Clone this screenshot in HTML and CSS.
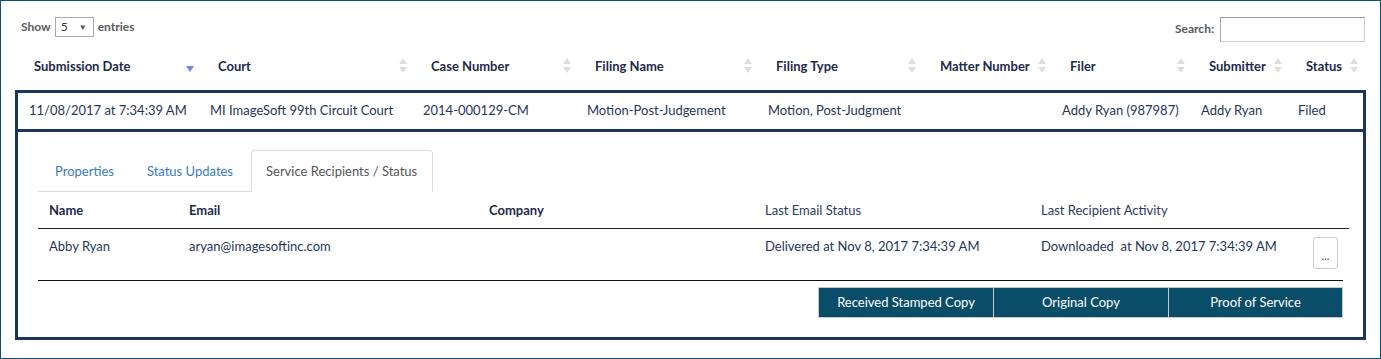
FILE: index.html
```html
<!DOCTYPE html>
<html>
<head>
<meta charset="utf-8">
<link rel="stylesheet" href="styles.css">
</head>
<body>
<div class="page">
  <div class="controls">
    <div class="length">
      <span class="lbl">Show</span>
      <span class="select"><span>5</span><span class="caret">&#9660;</span></span>
      <span class="lbl">entries</span>
    </div>
    <div class="search">
      <span class="lbl">Search:</span>
      <span class="input"></span>
    </div>
  </div>

  <div class="thead">
    <div class="th">Submission Date<span class="sort active"><svg width="8" height="6" viewBox="0 0 8 6"><path d="M0 0H8L4 6Z" fill="#7f82de"/></svg></span></div>
    <div class="th">Court<span class="sort"><svg width="8" height="15" viewBox="0 0 8 15"><path d="M4 0L8 6H0Z M0 9H8L4 15Z" fill="#dedede"/></svg></span></div>
    <div class="th">Case Number<span class="sort"><svg width="8" height="15" viewBox="0 0 8 15"><path d="M4 0L8 6H0Z M0 9H8L4 15Z" fill="#dedede"/></svg></span></div>
    <div class="th">Filing Name<span class="sort"><svg width="8" height="15" viewBox="0 0 8 15"><path d="M4 0L8 6H0Z M0 9H8L4 15Z" fill="#dedede"/></svg></span></div>
    <div class="th">Filing Type<span class="sort"><svg width="8" height="15" viewBox="0 0 8 15"><path d="M4 0L8 6H0Z M0 9H8L4 15Z" fill="#dedede"/></svg></span></div>
    <div class="th">Matter Number<span class="sort"><svg width="8" height="15" viewBox="0 0 8 15"><path d="M4 0L8 6H0Z M0 9H8L4 15Z" fill="#dedede"/></svg></span></div>
    <div class="th">Filer<span class="sort"><svg width="8" height="15" viewBox="0 0 8 15"><path d="M4 0L8 6H0Z M0 9H8L4 15Z" fill="#dedede"/></svg></span></div>
    <div class="th">Submitter<span class="sort"><svg width="8" height="15" viewBox="0 0 8 15"><path d="M4 0L8 6H0Z M0 9H8L4 15Z" fill="#dedede"/></svg></span></div>
    <div class="th th-last">Status<span class="sort"><svg width="8" height="15" viewBox="0 0 8 15"><path d="M4 0L8 6H0Z M0 9H8L4 15Z" fill="#dedede"/></svg></span></div>
  </div>

  <div class="frame">
    <div class="row">
      <div class="td">11/08/2017 at 7:34:39 AM</div>
      <div class="td">MI ImageSoft 99th Circuit Court</div>
      <div class="td">2014-000129-CM</div>
      <div class="td">Motion-Post-Judgement</div>
      <div class="td">Motion, Post-Judgment</div>
      <div class="td"></div>
      <div class="td">Addy Ryan (987987)</div>
      <div class="td">Addy Ryan</div>
      <div class="td">Filed</div>
    </div>
    <div class="detail">
      <div class="tabs">
        <span class="tab">Properties</span>
        <span class="tab">Status Updates</span>
        <span class="tab active">Service Recipients / Status</span>
      </div>
      <div class="rhead">
        <div class="rh b">Name</div>
        <div class="rh b">Email</div>
        <div class="rh b">Company</div>
        <div class="rh">Last Email Status</div>
        <div class="rh">Last Recipient Activity</div>
        <div class="rh"></div>
      </div>
      <div class="rrow">
        <div class="rd">Abby Ryan</div>
        <div class="rd">aryan@imagesoftinc.com</div>
        <div class="rd"></div>
        <div class="rd">Delivered at Nov 8, 2017 7:34:39 AM</div>
        <div class="rd">Downloaded&nbsp; at Nov 8, 2017 7:34:39 AM</div>
        <div class="rd"><span class="more">...</span></div>
      </div>
      <div class="actions">
        <span class="btn">Received Stamped Copy</span>
        <span class="btn">Original Copy</span>
        <span class="btn">Proof of Service</span>
      </div>
    </div>
  </div>
</div>
</body>
</html>
```

FILE: styles.css
```css
* { box-sizing: border-box; }
html, body { margin: 0; padding: 0; background: #fff; }
body { font-family: Lato, "Open Sans", sans-serif; font-size: 13px; color: #26365a; }
.page {
  width: 1381px; height: 359px;
  border: 1px solid #0e5270;
  padding: 0 14px 0 14px;
}
.controls {
  display: flex; justify-content: space-between; align-items: flex-start;
  height: 46px; padding-top: 15px;
}
.length { display: flex; align-items: center; gap: 4px; padding-left: 6px; height: 21px; }
.lbl { color: #5a5a5a; font-weight: bold; font-size: 12px; }
.select {
  display: inline-flex; align-items: center; justify-content: space-between;
  width: 39px; height: 20px; border: 1px solid #aaa; padding: 0 6px 0 5px;
  color: #333; font-size: 12px;
}
.caret { font-size: 8px; color: #555; }
.search { display: flex; align-items: center; gap: 6px; padding-top: 1px; }
.search .lbl { padding-bottom: 2px; }
.input {
  display: block; width: 145px; height: 25px;
  border: 1px solid #ccc; border-top-color: #999; border-left-color: #aaa;
  margin-right: 1px;
}
.thead {
  display: grid;
  grid-template-columns: 184px 213px 164px 181px 164px 130px 139px 97px 79px;
  height: 43px; padding-bottom: 6px; align-items: center;
}
.th {
  display: flex; justify-content: space-between; align-items: center;
  padding: 0 5px 0 19px; font-weight: bold; color: #1c2b4a; font-size: 13px;
}
.th-last { padding-right: 8px; }
.sort { display: flex; align-items: center; }
.sort svg { display: block; }
.sort.active { padding-top: 7px; }
.frame {
  border: 3px solid #1b365d;
  height: 250px;
}
.row {
  display: grid;
  grid-template-columns: 181px 213px 164px 181px 164px 130px 139px 97px 76px;
  height: 39px; border-bottom: 3px solid #1b365d; align-items: center;
  padding-bottom: 3px;
}
.td { padding-left: 11px; white-space: nowrap; }
.detail { padding: 18px 14px 0 20px; }
.tabs {
  display: flex; width: max-content; align-items: flex-end; height: 42px;
  border-bottom: 1px solid #ddd;
}
.tab {
  display: flex; align-items: center; height: 41px;
  padding: 0 16px 0 17px; color: #3a7bbf;
}
.tab:nth-child(2) { padding-right: 15px; margin-right: 3px; }
.tab.active {
  height: 42px; margin-bottom: -1px;
  color: #555; border: 1px solid #ddd; border-bottom-color: #fff; background: #fff;
  border-radius: 4px 4px 0 0; padding: 0 15px 0 14px;
}
.rhead, .rrow {
  display: grid;
  grid-template-columns: 140px 300px 276px 276px 272px 47px;
}
.rhead { height: 37px; align-items: center; border-bottom: 1px solid #222; }
.rh { padding-left: 11px; color: #2a3a5e; }
.rh.b { font-weight: bold; color: #1c2b4a; }
.rrow { height: 52px; border-bottom: 1px solid #111; margin-right: 6px; padding-top: 9px; }
.rd { padding-left: 11px; white-space: nowrap; }
.more {
  display: flex; justify-content: center; align-items: center;
  width: 25px; height: 32px; border: 1px solid #ccc; border-radius: 3px;
  font-size: 11px; color: #333; margin-top: -1px; padding-top: 5px;
}
.actions { display: flex; justify-content: flex-end; margin-right: 6px; padding-top: 6px; }
.btn {
  display: flex; align-items: center; justify-content: center;
  width: 175px; height: 31px; background: #0a4d69; color: #fff;
  border: 1px solid #c8c8c8; border-right-width: 0; font-size: 13px;
  padding-bottom: 2px;
}
.btn:last-child { border-right-width: 1px; }
```
